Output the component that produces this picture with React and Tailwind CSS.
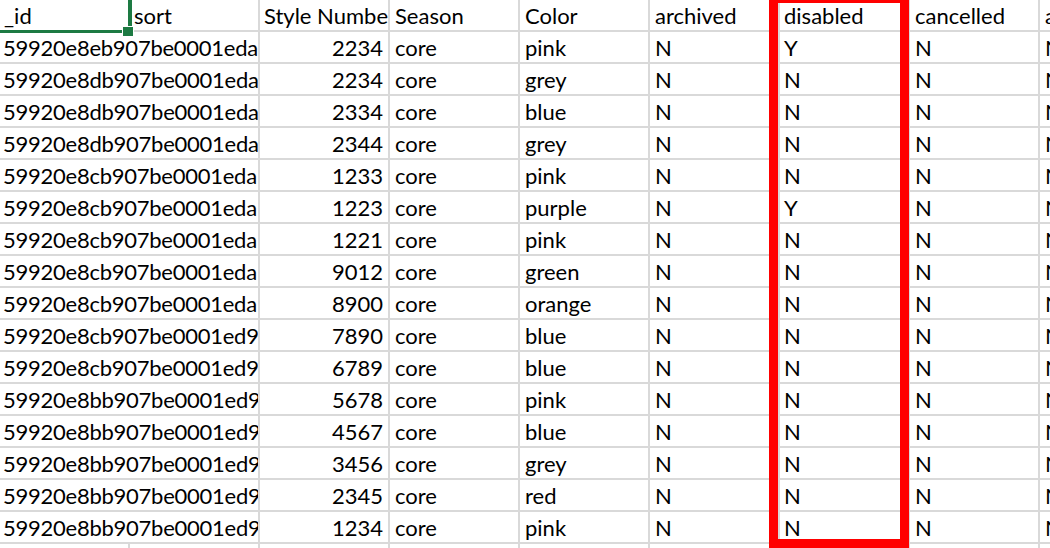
import React from "react";

const rows = [
  ["59920e8eb907be0001eda", "2234", "core", "pink", "N", "Y", "N", "N"],
  ["59920e8db907be0001eda", "2234", "core", "grey", "N", "N", "N", "N"],
  ["59920e8db907be0001eda", "2334", "core", "blue", "N", "N", "N", "N"],
  ["59920e8db907be0001eda", "2344", "core", "grey", "N", "N", "N", "N"],
  ["59920e8cb907be0001eda", "1233", "core", "pink", "N", "N", "N", "N"],
  ["59920e8cb907be0001eda", "1223", "core", "purple", "N", "Y", "N", "N"],
  ["59920e8cb907be0001eda", "1221", "core", "pink", "N", "N", "N", "N"],
  ["59920e8cb907be0001eda", "9012", "core", "green", "N", "N", "N", "N"],
  ["59920e8cb907be0001eda", "8900", "core", "orange", "N", "N", "N", "N"],
  ["59920e8cb907be0001ed9", "7890", "core", "blue", "N", "N", "N", "N"],
  ["59920e8cb907be0001ed9", "6789", "core", "blue", "N", "N", "N", "N"],
  ["59920e8bb907be0001ed9", "5678", "core", "pink", "N", "N", "N", "N"],
  ["59920e8bb907be0001ed9", "4567", "core", "blue", "N", "N", "N", "N"],
  ["59920e8bb907be0001ed9", "3456", "core", "grey", "N", "N", "N", "N"],
  ["59920e8bb907be0001ed9", "2345", "core", "red", "N", "N", "N", "N"],
  ["59920e8bb907be0001ed9", "1234", "core", "pink", "N", "N", "N", "N"],
];

const cell =
  "h-[32px] shrink-0 border-r-2 border-b-2 border-[#d9d9d9] overflow-hidden whitespace-nowrap leading-[32px]";

export default function App() {
  return (
    <div
      className="relative w-[1050px] h-[548px] overflow-hidden bg-white text-black text-[22px]"
      style={{ fontFamily: "Lato, 'Liberation Sans', sans-serif" }}
    >
      <div className="flex flex-col">
        {/* header */}
        <div className="flex">
          <div className={`${cell} w-[130px] pl-[4px]`}>_id</div>
          <div className={`${cell} w-[130px] pl-[4px]`}>sort</div>
          <div className={`${cell} w-[130px] pl-[4px]`}>Style Number</div>
          <div className={`${cell} w-[130px] pl-[5px]`}>Season</div>
          <div className={`${cell} w-[130px] pl-[5px]`}>Color</div>
          <div className={`${cell} w-[130px] pl-[5px]`}>archived</div>
          <div className={`${cell} w-[130px] pl-[4px]`}>disabled</div>
          <div className={`${cell} w-[130px] pl-[5px]`}>cancelled</div>
          <div className={`${cell} w-[130px] pl-[5px]`}>active</div>
        </div>
        {rows.map((r, i) => (
          <div key={i} className="flex">
            <div className={`${cell} w-[260px] pl-[3px] tracking-[-0.25px]`}>{r[0]}</div>
            <div className={`${cell} w-[130px] pr-[5px] text-right`}>{r[1]}</div>
            <div className={`${cell} w-[130px] pl-[5px]`}>{r[2]}</div>
            <div className={`${cell} w-[130px] pl-[5px]`}>{r[3]}</div>
            <div className={`${cell} w-[130px] pl-[5px]`}>{r[4]}</div>
            <div className={`${cell} w-[130px] pl-[4px]`}>{r[5]}</div>
            <div className={`${cell} w-[130px] pl-[5px]`}>{r[6]}</div>
            <div className={`${cell} w-[130px] pl-[5px]`}>{r[7]}</div>
          </div>
        ))}
        <div className="flex">
          {Array.from({ length: 9 }).map((_, i) => (
            <div key={i} className={`${cell} w-[130px]`} />
          ))}
        </div>
      </div>

      {/* selection of cell A1 */}
      <div className="absolute left-[128px] top-0 w-[4px] h-[31px] bg-[#1d7a43]" />
      <div className="absolute left-0 top-[30px] w-[122px] h-[3px] bg-[#1d7a43]" />
      <div className="absolute left-[122px] top-[26px] w-[12px] h-[11px] bg-[#1d7a43] border border-white" />

      {/* red annotation box */}
      <div className="absolute left-[769px] top-[-6px] w-[140px] h-[554px] border-[9px] border-[#ff0000]" />
    </div>
  );
}
